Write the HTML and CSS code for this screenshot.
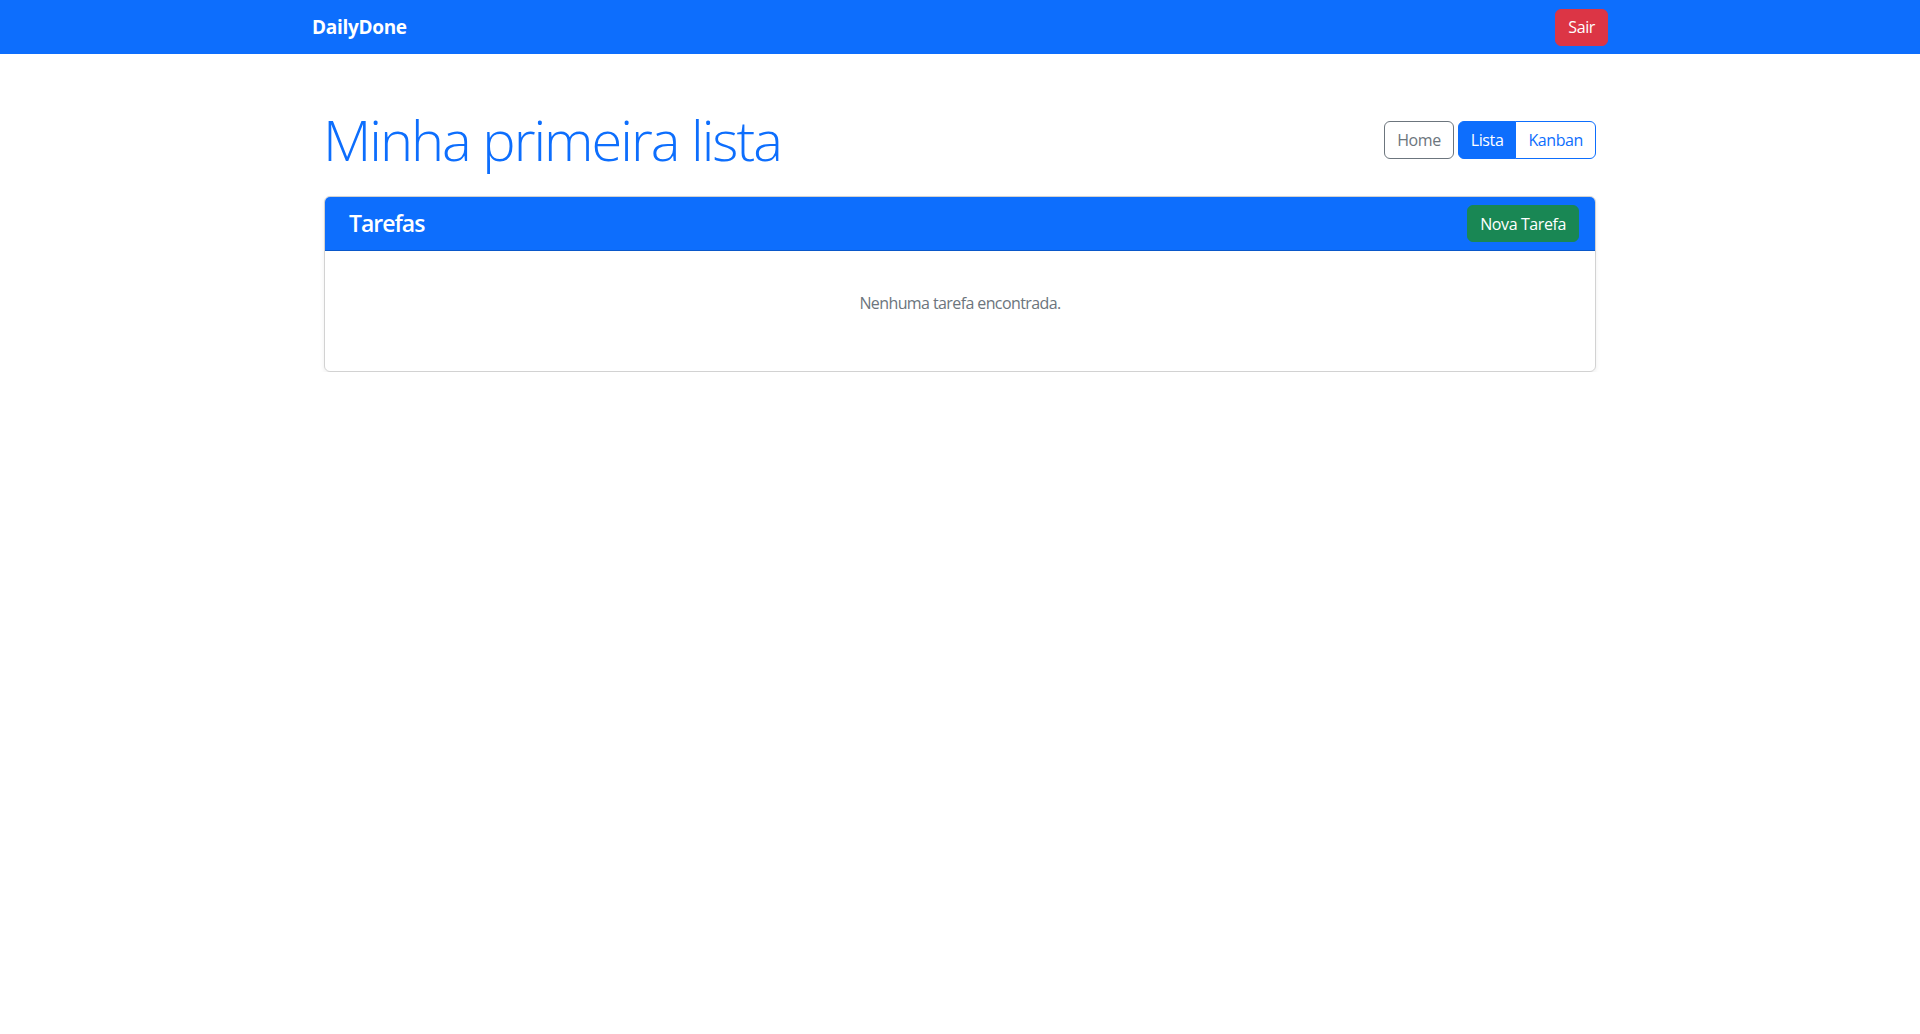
FILE: index.html
```html
<!DOCTYPE html>
<html lang="pt-BR">
<head>
<meta charset="utf-8">
<title>DailyDone - Minha primeira lista</title>
<link rel="stylesheet" href="styles.css">
</head>
<body>
<nav class="navbar">
  <div class="nav-container">
    <a class="brand" href="#">DailyDone</a>
    <button class="btn btn-danger">Sair</button>
  </div>
</nav>
<main class="page">
  <div class="page-head">
    <h1 class="title">Minha primeira lista</h1>
    <div class="views">
      <a class="btn btn-outline-secondary" href="#">Home</a>
      <div class="btn-group">
        <a class="btn btn-primary" href="#">Lista</a>
        <a class="btn btn-outline-primary" href="#">Kanban</a>
      </div>
    </div>
  </div>
  <section class="card">
    <header class="card-header">
      <h4 class="card-title">Tarefas</h4>
      <button class="btn btn-success">Nova Tarefa</button>
    </header>
    <div class="card-body">
      <p class="empty">Nenhuma tarefa encontrada.</p>
    </div>
  </section>
</main>
</body>
</html>
```
FILE: styles.css
```css
* { box-sizing: border-box; }
html, body { margin: 0; padding: 0; }
body {
  font-family: "Open Sans", "Noto Sans", sans-serif;
  font-size: 16px;
  line-height: 1.5;
  color: #212529;
  background: #fff;
}
.navbar {
  background: #0d6efd;
  height: 54px;
  display: flex;
  align-items: center;
}
.nav-container {
  width: 1320px;
  margin: 0 auto;
  padding: 0 12px;
  display: flex;
  align-items: center;
  justify-content: space-between;
}
.brand {
  color: #fff;
  text-decoration: none;
  font-size: 19px;
  font-weight: 700;
  letter-spacing: -0.3px;
}
.btn {
  display: inline-flex;
  align-items: center;
  justify-content: center;
  height: 38px;
  padding: 0 12px;
  font-family: inherit;
  font-size: 16px;
  line-height: 24px;
  border: 1px solid transparent;
  border-radius: 6px;
  text-decoration: none;
  cursor: pointer;
  letter-spacing: -0.4px;
}
.btn-danger { background: #dc3545; border-color: #dc3545; color: #fff; height: 37px; }
.btn-success { background: #198754; border-color: #198754; color: #fff; height: 37px; }
.btn-primary { background: #0d6efd; border-color: #0d6efd; color: #fff; }
.btn-outline-primary { background: #fff; border-color: #0d6efd; color: #0d6efd; }
.btn-outline-secondary { background: #fff; border-color: #6c757d; color: #6c757d; }
.page {
  width: 1320px;
  margin: 0 auto;
  padding: 54px 24px 0;
}
.page-head {
  display: flex;
  align-items: center;
  justify-content: space-between;
  margin-bottom: 21px;
}
.title {
  margin: -2px 0 2px -1px;
  font-size: 56px;
  font-weight: 300;
  line-height: 67px;
  color: #0d6efd;
  letter-spacing: -2px;
}
.views {
  display: flex;
  align-items: center;
  gap: 4px;
  margin-top: -4px;
}
.btn-group { display: flex; }
.btn-group .btn:first-child { border-top-right-radius: 0; border-bottom-right-radius: 0; }
.btn-group .btn:last-child { border-top-left-radius: 0; border-bottom-left-radius: 0; margin-left: -1px; }
.card {
  border: 1px solid rgba(0, 0, 0, 0.175);
  border-radius: 6px;
  box-shadow: 0 2px 4px rgba(0, 0, 0, 0.075);
  overflow: hidden;
}
.card-header {
  background: #0d6efd;
  border-bottom: 1px solid #0a58ca;
  display: flex;
  align-items: center;
  justify-content: space-between;
  padding: 8px 16px 8px 24px;
}
.card-title {
  margin: 0;
  color: #fff;
  font-size: 23px;
  font-weight: 600;
  letter-spacing: -1px;
}
.card-body {
  padding: 16px;
}
.empty {
  margin: 0 0 16px;
  padding: 24px 0;
  text-align: center;
  color: #6c757d;
  font-size: 16px;
  letter-spacing: -0.6px;
}
```
